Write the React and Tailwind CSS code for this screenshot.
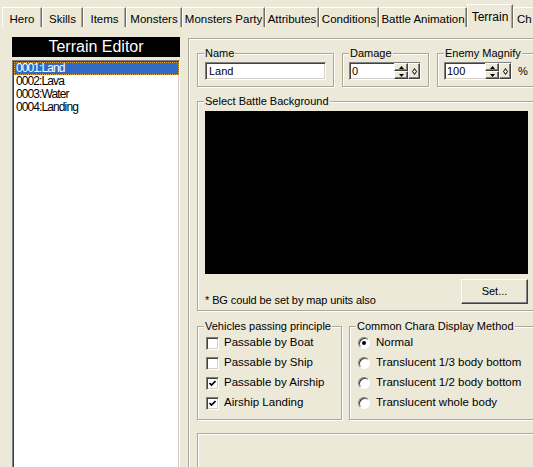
import React from "react";

/* -------------------- helpers -------------------- */
const ETCHED = "border border-[#aca899] shadow-[inset_1px_1px_0_#fff,1px_1px_0_#fff]";
const SUNKEN =
  "border border-t-[#808080] border-l-[#808080] border-r-white border-b-white shadow-[inset_1px_1px_0_#404040,inset_-1px_-1px_0_#d4d0c8]";
const RAISED =
  "border border-t-white border-l-white border-r-[#404040] border-b-[#404040] shadow-[inset_-1px_-1px_0_#808080] bg-[#ece9d8]";

const TABS = [
  ["Hero", 40],
  ["Skills", 41],
  ["Items", 43],
  ["Monsters", 56],
  ["Monsters Party", 83],
  ["Attributes", 54],
  ["Conditions", 60],
  ["Battle Animation", 88],
  ["Terrain", 46],
  ["Ch", 40],
];

const TERRAINS = ["0001:Land", "0002:Lava", "0003:Water", "0004:Landing"];

/* -------------------- UI bits -------------------- */

function Group({ label, className, children }) {
  return (
    <div className={"relative " + ETCHED + " " + className}>
      <span className="absolute left-[6px] top-[-7px] bg-[#ece9d8] px-[1px] leading-[13px] whitespace-nowrap">
        {label}
      </span>
      {children}
    </div>
  );
}

function Spinner() {
  return (
    <div className="flex h-full">
      <div className="flex w-[14px] flex-col">
        <div className={"flex flex-1 items-center justify-center " + RAISED}>
          <svg width="5" height="3" viewBox="0 0 5 3">
            <path d="M2.5 0L5 3H0z" fill="#000" />
          </svg>
        </div>
        <div className={"flex flex-1 items-center justify-center " + RAISED}>
          <svg width="5" height="3" viewBox="0 0 5 3">
            <path d="M0 0H5L2.5 3z" fill="#000" />
          </svg>
        </div>
      </div>
      <div className={"flex w-[12px] items-center justify-center " + RAISED}>
        <svg width="5" height="7" viewBox="0 0 5 7">
          <path d="M2.5 0.5L4.5 3.5L2.5 6.5L0.5 3.5z" fill="none" stroke="#000" strokeWidth="1" />
        </svg>
      </div>
    </div>
  );
}

function NumField({ value, width }) {
  return (
    <div className={"flex h-[18px] bg-white " + SUNKEN} style={{ width }}>
      <div className="flex-1 pl-[2px] leading-[16px]">{value}</div>
      <Spinner />
    </div>
  );
}

function Check({ checked, label }) {
  return (
    <div className="flex h-[20px] items-center">
      <div className={"flex h-[13px] w-[13px] items-center justify-center bg-white " + SUNKEN}>
        {checked && (
          <svg width="7" height="7" viewBox="0 0 7 7">
            <path d="M0.5 3L2.5 5L6.5 1" fill="none" stroke="#000" strokeWidth="1.6" />
          </svg>
        )}
      </div>
      <span className="ml-[5px] text-[11.5px]">{label}</span>
    </div>
  );
}

function Radio({ checked, label }) {
  return (
    <div className="flex h-[20px] items-center">
      <div className="flex h-[12px] w-[12px] items-center justify-center rounded-full border border-t-[#808080] border-l-[#808080] border-r-white border-b-white bg-white shadow-[inset_1px_1px_0_#404040]">
        {checked && <div className="h-[4px] w-[4px] rounded-full bg-black" />}
      </div>
      <span className="ml-[6px] text-[11.5px]">{label}</span>
    </div>
  );
}

/* -------------------- main page -------------------- */

export default function App() {
  return (
    <div className="relative h-[467px] w-[533px] overflow-hidden bg-[#ece9d8] font-['Liberation_Sans',Arial,sans-serif] text-[11px] text-black">
      {/* Tabs */}
      <div className="flex h-[28px] items-end pl-[2px]">
        {TABS.map(([t, w]) => {
          const sel = t === "Terrain";
          const last = t === "Ch";
          return (
            <div
              key={t}
              style={{ width: w }}
              className={
                "flex shrink-0 whitespace-nowrap border-l border-t border-r border-l-white border-t-white border-r-[#716f64] shadow-[inset_-1px_0_0_#aca899] " +
                (last ? "justify-start pl-[3px] " : "justify-center ") +
                (sel ? "h-[24px] pt-[3px] text-[12px]" : "mb-[1px] h-[20px] pt-[3px] text-[11.5px]")
              }
            >
              {t}
            </div>
          );
        })}
      </div>

      <div className="flex pl-[12px]">
        {/* Left column */}
        <div className="mt-[9px] w-[168px] shrink-0">
          <div className="flex h-[20px] items-center justify-center bg-black text-[16px] leading-none text-white">
            Terrain Editor
          </div>
          <div className={"mt-[3px] h-[420px] bg-white pl-[1px] pt-[1px] " + SUNKEN}>
            {TERRAINS.map((t, i) => (
              <div
                key={t}
                className={
                  "h-[13px] pl-[2px] text-[12px] leading-[13px] tracking-[-0.9px] " +
                  (i === 0 ? "bg-[#316ac5] text-white outline outline-1 outline-dotted outline-[#e0a040] -outline-offset-1" : "")
                }
              >
                {t}
              </div>
            ))}
          </div>
        </div>

        {/* Right panel */}
        <div className="ml-[8px] mt-[10px] w-[380px] shrink-0 border-l border-t border-[#aca899] pl-[8px] pt-[14px] shadow-[inset_1px_1px_0_#fff]">
          <div className="flex">
            <Group label="Name" className="h-[34px] w-[137px]">
              <div className={"ml-[7px] mt-[8px] h-[18px] w-[121px] bg-white pl-[3px] leading-[16px] " + SUNKEN}>
                Land
              </div>
            </Group>
            <Group label="Damage" className="ml-[8px] h-[34px] w-[87px]">
              <div className="ml-[6px] mt-[8px]">
                <NumField value="0" width={72} />
              </div>
            </Group>
            <Group label="Enemy Magnify" className="ml-[8px] h-[34px] w-[120px]">
              <div className="ml-[6px] mt-[8px] flex items-center">
                <NumField value="100" width={68} />
                <span className="ml-[6px]">%</span>
              </div>
            </Group>
          </div>

          <Group label="Select Battle Background" className="mt-[14px] h-[210px] w-[345px]">
            <div className="ml-[7px] mt-[9px] h-[163px] w-[323px] bg-black" />
            <div className="mt-[5px] flex w-[330px] items-start">
              <span className="ml-[7px] mt-[13px] flex-1 tracking-[-0.1px]">* BG could be set by map units also</span>
              <div className={"flex h-[25px] w-[67px] items-center justify-center " + RAISED}>Set...</div>
            </div>
          </Group>

          <div className="mt-[15px] flex">
            <Group label="Vehicles passing principle" className="h-[94px] w-[145px] pl-[8px] pt-[6px]">
              <Check label="Passable by Boat" />
              <Check label="Passable by Ship" />
              <Check checked label="Passable by Airship" />
              <Check checked label="Airship Landing" />
            </Group>
            <Group label="Common Chara Display Method" className="ml-[7px] h-[94px] w-[200px] pl-[8px] pt-[6px]">
              <Radio checked label="Normal" />
              <Radio label="Translucent 1/3 body bottom" />
              <Radio label="Translucent 1/2 body bottom" />
              <Radio label="Translucent whole body" />
            </Group>
          </div>

          <div className={"mt-[13px] h-[60px] w-[360px] " + ETCHED} />
        </div>
      </div>
    </div>
  );
}
